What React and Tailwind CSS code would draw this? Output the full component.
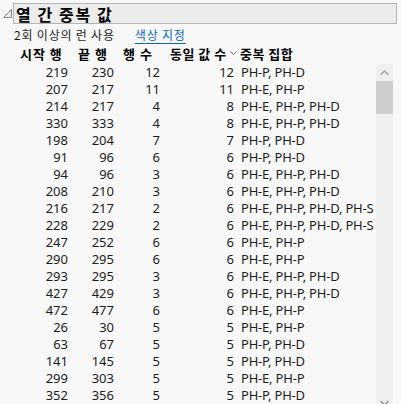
import React from "react";

const rows = [
  [219, 230, 12, 12, "PH-P, PH-D"],
  [207, 217, 11, 11, "PH-E, PH-P"],
  [214, 217, 4, 8, "PH-E, PH-P, PH-D"],
  [330, 333, 4, 8, "PH-E, PH-P, PH-D"],
  [198, 204, 7, 7, "PH-P, PH-D"],
  [91, 96, 6, 6, "PH-P, PH-D"],
  [94, 96, 3, 6, "PH-E, PH-P, PH-D"],
  [208, 210, 3, 6, "PH-E, PH-P, PH-D"],
  [216, 217, 2, 6, "PH-E, PH-P, PH-D, PH-S"],
  [228, 229, 2, 6, "PH-E, PH-P, PH-D, PH-S"],
  [247, 252, 6, 6, "PH-E, PH-P"],
  [290, 295, 6, 6, "PH-E, PH-P"],
  [293, 295, 3, 6, "PH-E, PH-P, PH-D"],
  [427, 429, 3, 6, "PH-E, PH-P, PH-D"],
  [472, 477, 6, 6, "PH-E, PH-P"],
  [26, 30, 5, 5, "PH-E, PH-P"],
  [63, 67, 5, 5, "PH-P, PH-D"],
  [141, 145, 5, 5, "PH-P, PH-D"],
  [299, 303, 5, 5, "PH-E, PH-P"],
  [352, 356, 5, 5, "PH-P, PH-D"],
];

const font = { fontFamily: '"Noto Sans", "Noto Sans CJK KR", sans-serif' };
const kr = { fontFamily: '"Noto Sans CJK KR", sans-serif' };

export default function App() {
  return (
    <div
      className="w-[401px] h-[404px] overflow-hidden bg-[#f8f8f8] text-[#1c1c1c] relative"
      style={font}
    >
      {/* title bar */}
      <div className="flex items-start pt-[3px]">
        <div className="w-[13px] h-[20px] flex items-start pl-[3px] pt-[6px]">
          <svg width="9" height="9" viewBox="0 0 9 9">
            <path d="M8.5 0.5 L8.5 8.5 L0.5 8.5 Z" fill="#e8e8e8" stroke="#8a8a8a" strokeWidth="1" />
          </svg>
        </div>
        <div className="w-[384px] h-[21px] bg-[#ececec] border border-[#b4b4b4] flex items-center pl-[2px]">
          <span className="text-[16px] font-bold leading-none tracking-[1.6px] text-black" style={kr}>
            열 간 중복 값
          </span>
        </div>
      </div>

      {/* options line */}
      <div className="flex items-center h-[18px] mt-[2px] pl-[14px] text-[12px] leading-none tracking-[0.8px]" style={kr}>
        <span className="text-[#1c1c1c]">2회 이상의 런 사용</span>
        <span className="ml-[20px] text-[#0a64c8] underline underline-offset-[3px]">색상 지정</span>
      </div>

      {/* header row */}
      <div className="flex items-center h-[18px] text-[13px] font-bold leading-none text-black" style={kr}>
        <div className="w-[78px] pl-[20px] tracking-[1px]">시작 행</div>
        <div className="w-[45px] tracking-[1px]">끝 행</div>
        <div className="w-[47px] tracking-[1px]">행 수</div>
        <div className="w-[70px] flex items-center tracking-[0.5px]">
          <span>동일 값 수</span>
          <svg className="ml-[3px]" width="7" height="5" viewBox="0 0 7 5">
            <path d="M0.5 0.5 L3.5 3.5 L6.5 0.5" fill="none" stroke="#777" strokeWidth="1" />
          </svg>
        </div>
        <div className="tracking-[0.5px]">중복 집합</div>
      </div>

      {/* body */}
      <div className="flex mt-[2px]">
        <div className="w-[376px] overflow-hidden">
          {rows.map((r, i) => (
            <div key={i} className="flex items-center h-[17px] text-[13px] leading-none whitespace-nowrap">
              <div className="w-[68px] text-right">{r[0]}</div>
              <div className="w-[46px] text-right">{r[1]}</div>
              <div className="w-[46px] text-right">{r[2]}</div>
              <div className="w-[74px] text-right">{r[3]}</div>
              <div className="pl-[7px] tracking-[-0.2px]">{r[4]}</div>
            </div>
          ))}
        </div>
        <div className="w-[17px] h-[341px] bg-[#efefef] flex flex-col items-center">
          <div className="h-[17px] flex items-center justify-center">
            <svg width="9" height="6" viewBox="0 0 9 6">
              <path d="M0.5 5 L4.5 1 L8.5 5" fill="none" stroke="#a0a0a0" strokeWidth="1.3" />
            </svg>
          </div>
          <div className="w-[17px] h-[33px] bg-[#cdcdcd]" />
          <div className="flex-1" />
          <div className="h-[17px] flex items-center justify-center mb-[-6px]">
            <svg width="9" height="6" viewBox="0 0 9 6">
              <path d="M0.5 1 L4.5 5 L8.5 1" fill="none" stroke="#8a8a8a" strokeWidth="1.3" />
            </svg>
          </div>
        </div>
      </div>
    </div>
  );
}
